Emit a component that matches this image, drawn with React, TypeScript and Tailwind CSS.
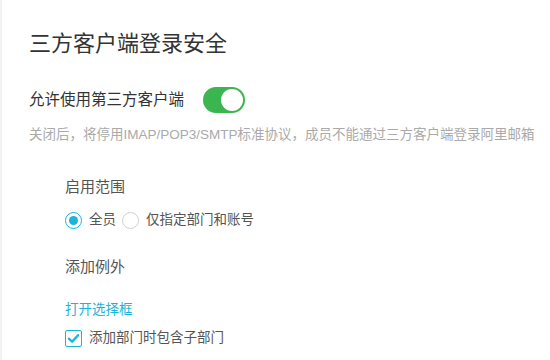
import React, { useState } from 'react';

const font = { fontFamily: '"Liberation Sans", "Noto Sans CJK SC", sans-serif' };

const Toggle: React.FC<{ on: boolean; onChange: () => void }> = ({ on, onChange }) => (
  <button
    onClick={onChange}
    className={`relative w-[42px] h-[26px] rounded-full flex-shrink-0 ${on ? 'bg-[#3bb54f]' : 'bg-[#d9d9d9]'}`}
  >
    <span
      className={`absolute top-[2px] w-[22px] h-[22px] rounded-full bg-white ${on ? 'left-[18px]' : 'left-[2px]'}`}
    />
  </button>
);

const Radio: React.FC<{ checked: boolean; label: string; onClick: () => void }> = ({ checked, label, onClick }) => (
  <label onClick={onClick} className="flex items-center gap-[7px] cursor-pointer">
    <span
      className={`w-[17px] h-[17px] rounded-full border-[1.5px] flex items-center justify-center bg-white ${
        checked ? 'border-[#1bb4da]' : 'border-[#cfcfcf]'
      }`}
    >
      {checked && <span className="w-[9px] h-[9px] rounded-full bg-[#1bb4da]" />}
    </span>
    <span className="text-[13.5px] leading-[20px] text-[#555]">{label}</span>
  </label>
);

export default function App() {
  const [enabled, setEnabled] = useState(true);
  const [scope, setScope] = useState<'all' | 'some'>('all');
  const [includeSub, setIncludeSub] = useState(true);

  return (
    <div style={font} className="w-[550px] h-[360px] bg-white border-l-2 border-[#f2f2f2] overflow-hidden">
      <div className="pt-[29px] pl-[27px]">
        {/* Title */}
        <h1 className="text-[22px] leading-[30px] text-[#333]">三方客户端登录安全</h1>

        {/* Switch row */}
        <div className="mt-[28px] h-[26px] flex items-center">
          <span className="text-[15.5px] text-[#333]">允许使用第三方客户端</span>
          <span className="ml-[19px] flex">
            <Toggle on={enabled} onChange={() => setEnabled(!enabled)} />
          </span>
        </div>

        <p className="mt-[13px] text-[13.5px] leading-[18px] text-[#aaa] whitespace-nowrap">
          关闭后，将停用IMAP/POP3/SMTP标准协议，成员不能通过三方客户端登录阿里邮箱
        </p>

        {/* Scope */}
        <div className="pl-[36px]">
          <div className="mt-[33px] text-[15px] leading-[20px] text-[#555]">启用范围</div>
          <div className="mt-[13px] h-[20px] flex items-center gap-[6px]">
            <Radio checked={scope === 'all'} label="全员" onClick={() => setScope('all')} />
            <Radio checked={scope === 'some'} label="仅指定部门和账号" onClick={() => setScope('some')} />
          </div>

          <div className="mt-[27px] text-[15px] leading-[20px] text-[#555]">添加例外</div>
          <div className="mt-[23px] text-[13.5px] leading-[20px] text-[#1bb4da] cursor-pointer">打开选择框</div>

          <label
            onClick={() => setIncludeSub(!includeSub)}
            className="mt-[8px] h-[20px] flex items-center gap-[7px] cursor-pointer"
          >
            <span className="w-[17px] h-[17px] rounded-[2px] border-[1.5px] border-[#1bb4da] bg-white flex items-center justify-center">
              {includeSub && (
                <svg width="13" height="13" viewBox="0 0 12 12" fill="none">
                  <path d="M1.8 6.2L4.7 9L10.2 3" stroke="#1bb4da" strokeWidth="2.2" strokeLinecap="round" strokeLinejoin="round" />
                </svg>
              )}
            </span>
            <span className="text-[13.5px] leading-[20px] text-[#555]">添加部门时包含子部门</span>
          </label>
        </div>
      </div>
    </div>
  );
}
